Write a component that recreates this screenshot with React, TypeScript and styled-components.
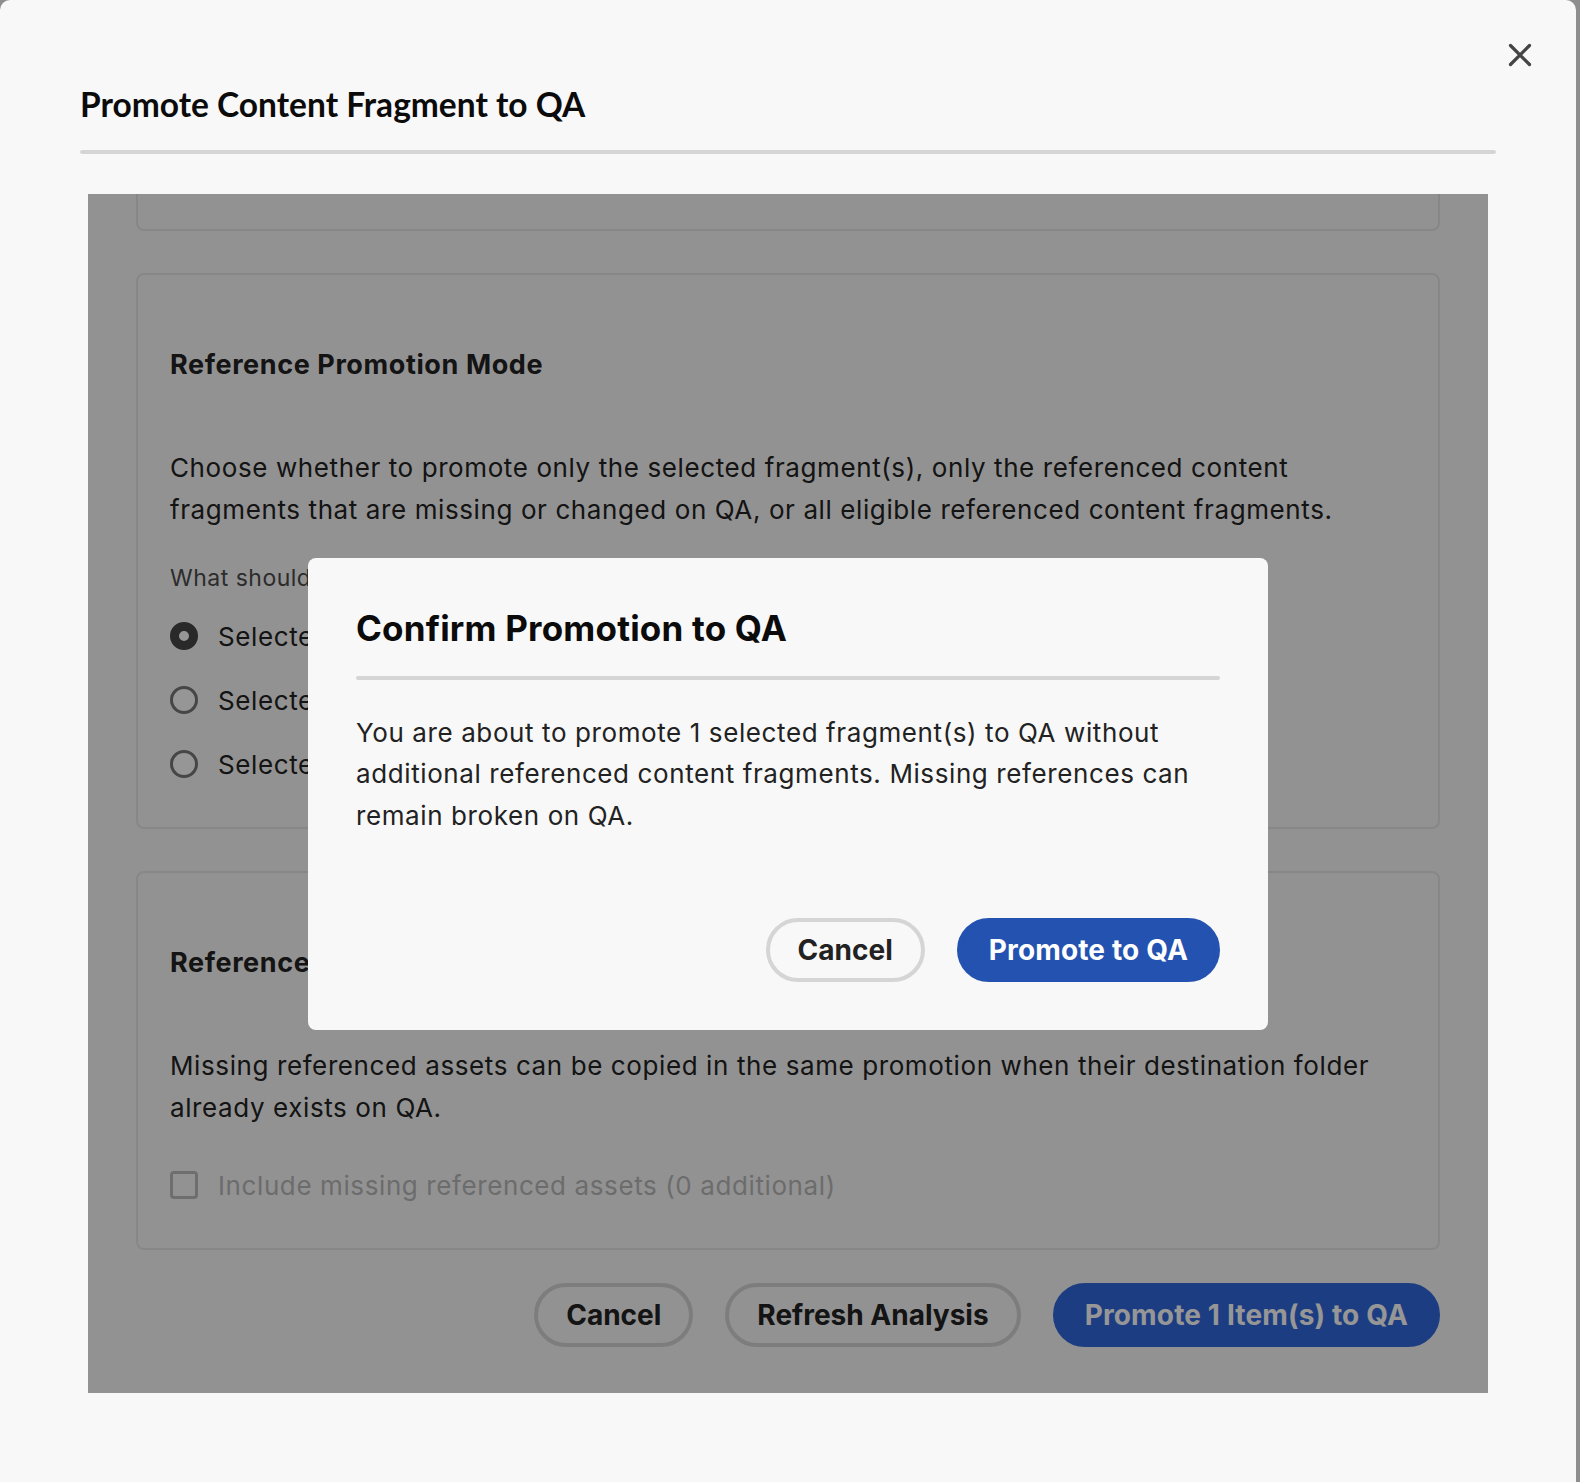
import React from "react";
import styled, { createGlobalStyle } from "styled-components";

const GlobalStyle = createGlobalStyle`
  html, body {
    margin: 0;
    padding: 0;
  }
  body {
    background: #8e8e8e;
    font-family: Inter, "Liberation Sans", sans-serif;
    color: #222;
  }
  * {
    box-sizing: border-box;
  }
`;

const Modal = styled.div`
  position: relative;
  width: 1576px;
  min-height: 100vh;
  background: #f8f8f8;
  border-radius: 10px 10px 0 0;
  padding: 84px 80px 0;
`;

const Title = styled.h1`
  margin: 0;
  font-family: Lato, "Open Sans", sans-serif;
  font-size: 33.5px;
  line-height: 40px;
  font-weight: 700;
  color: #0b0b0b;
`;

const Divider = styled.div<{ $mt: number }>`
  height: 4px;
  border-radius: 2px;
  background: #d5d5d5;
  margin-top: ${({ $mt }) => $mt}px;
`;

const CloseButton = styled.button`
  position: absolute;
  top: 43px;
  right: 44px;
  width: 24px;
  height: 24px;
  padding: 0;
  border: none;
  background: none;
  color: #444;
  cursor: pointer;

  svg {
    display: block;
  }
`;

const Panel = styled.div`
  position: relative;
  margin: 40px 8px 0;
  height: 1199px;
  overflow: hidden;
`;

const ScrollBody = styled.div`
  display: flex;
  flex-direction: column;
  padding: 0 48px 47px;
`;

const Cards = styled.div`
  display: flex;
  flex-direction: column;
  gap: 42px;
`;

const Card = styled.section<{ $tail?: boolean }>`
  border: 2px solid #e5e5e5;
  border-radius: 8px;
  padding: 32px 32px 31px;
  height: ${({ $tail }) => ($tail ? "120px" : "auto")};
  margin-top: ${({ $tail }) => ($tail ? "-83px" : "0")};
`;

const CardHeading = styled.h3`
  margin: 41px 0 0;
  font-size: 27px;
  line-height: 34px;
  letter-spacing: 0.6px;
  font-weight: 700;
  color: #222;
`;

const Text = styled.p<{ $mt: number }>`
  margin: ${({ $mt }) => $mt}px 0 0;
  font-size: 26px;
  line-height: 41.5px;
  letter-spacing: 0.6px;
  color: #222;
`;

const FieldLabel = styled.div`
  margin-top: 33px;
  font-size: 23px;
  line-height: 30px;
  letter-spacing: 0.5px;
  color: #4b4b4b;
`;

const OptionList = styled.div<{ $mt: number }>`
  display: flex;
  flex-direction: column;
  margin-top: ${({ $mt }) => $mt}px;
`;

const Option = styled.label<{ $disabled?: boolean }>`
  display: flex;
  align-items: center;
  gap: 20px;
  height: 64px;
  font-size: 26px;
  letter-spacing: 0.6px;
  color: ${({ $disabled }) => ($disabled ? "#b8b8b8" : "#222")};
`;

const RadioMark = styled.span<{ $checked?: boolean }>`
  flex: none;
  width: 28px;
  height: 28px;
  border-radius: 50%;
  background: #fff;
  border: ${({ $checked }) =>
    $checked ? "9px solid #464646" : "3px solid #787878"};
`;

const CheckMark = styled.span`
  flex: none;
  width: 28px;
  height: 28px;
  border-radius: 4px;
  border: 3px solid #bcbcbc;
`;

const ButtonRow = styled.div<{ $mt: number }>`
  display: flex;
  justify-content: flex-end;
  gap: 32px;
  margin-top: ${({ $mt }) => $mt}px;
`;

const Button = styled.button<{ $variant: "secondary" | "accent" | "cta" }>`
  height: 64px;
  padding: 0 28px;
  border-radius: 32px;
  font-family: Inter, "Liberation Sans", sans-serif;
  font-size: 28px;
  font-weight: 700;
  letter-spacing: ${({ $variant }) => ($variant === "secondary" ? "0" : "0.15px")};
  cursor: pointer;
  border: 4px solid
    ${({ $variant }) =>
      $variant === "secondary"
        ? "#d5d5d5"
        : $variant === "accent"
        ? "#2352b0"
        : "#3068dd"};
  background: ${({ $variant }) =>
    $variant === "secondary"
      ? "transparent"
      : $variant === "accent"
      ? "#2352b0"
      : "#3068dd"};
  color: ${({ $variant }) => ($variant === "secondary" ? "#222" : "#fff")};
`;

const Underlay = styled.div`
  position: absolute;
  inset: 0;
  background: rgba(0, 0, 0, 0.411);
  display: flex;
  align-items: center;
  justify-content: center;
`;

const ConfirmDialog = styled.div`
  width: 960px;
  padding: 48px;
  border-radius: 8px;
  background: #f8f8f8;
`;

const ConfirmTitle = styled.h2`
  margin: 0;
  font-size: 35px;
  line-height: 44px;
  letter-spacing: 0.2px;
  font-weight: 700;
  color: #0b0b0b;
`;

const CloseIcon = () => (
  <svg width="24" height="24" viewBox="0 0 24 24" fill="none">
    <path
      d="M2.5 2.5 L21.5 21.5 M21.5 2.5 L2.5 21.5"
      stroke="currentColor"
      strokeWidth="3.2"
      strokeLinecap="round"
    />
  </svg>
);

const modes = [
  { label: "Selected fragment(s) only", checked: true },
  { label: "Selected + missing or changed references", checked: false },
  { label: "Selected + all eligible references", checked: false },
];

export default function App() {
  return (
    <>
      <GlobalStyle />
      <Modal>
        <CloseButton aria-label="Close">
          <CloseIcon />
        </CloseButton>
        <Title>Promote Content Fragment to QA</Title>
        <Divider $mt={26} />

        <Panel>
          <ScrollBody>
            <Cards>
              <Card $tail />
              <Card>
                <CardHeading>Reference Promotion Mode</CardHeading>
                <Text $mt={65}>
                  Choose whether to promote only the selected fragment(s), only
                  the referenced content fragments that are missing or changed
                  on QA, or all eligible referenced content fragments.
                </Text>
                <FieldLabel>What should be promoted?</FieldLabel>
                <OptionList $mt={11}>
                  {modes.map((m) => (
                    <Option key={m.label}>
                      <RadioMark $checked={m.checked} />
                      {m.label}
                    </Option>
                  ))}
                </OptionList>
              </Card>
              <Card>
                <CardHeading>Referenced Assets</CardHeading>
                <Text $mt={65}>
                  Missing referenced assets can be copied in the same promotion
                  when their destination folder already exists on QA.
                </Text>
                <OptionList $mt={25}>
                  <Option $disabled>
                    <CheckMark />
                    Include missing referenced assets (0 additional)
                  </Option>
                </OptionList>
              </Card>
            </Cards>
            <ButtonRow $mt={33}>
              <Button $variant="secondary">Cancel</Button>
              <Button $variant="secondary">Refresh Analysis</Button>
              <Button $variant="cta">Promote 1 Item(s) to QA</Button>
            </ButtonRow>
          </ScrollBody>

          <Underlay>
            <ConfirmDialog role="alertdialog">
              <ConfirmTitle>Confirm Promotion to QA</ConfirmTitle>
              <Divider $mt={26} />
              <Text $mt={32}>
                You are about to promote 1 selected fragment(s) to QA without
                additional referenced content fragments. Missing references can
                remain broken on QA.
              </Text>
              <ButtonRow $mt={81.5}>
                <Button $variant="secondary">Cancel</Button>
                <Button $variant="accent">Promote to QA</Button>
              </ButtonRow>
            </ConfirmDialog>
          </Underlay>
        </Panel>
      </Modal>
    </>
  );
}
